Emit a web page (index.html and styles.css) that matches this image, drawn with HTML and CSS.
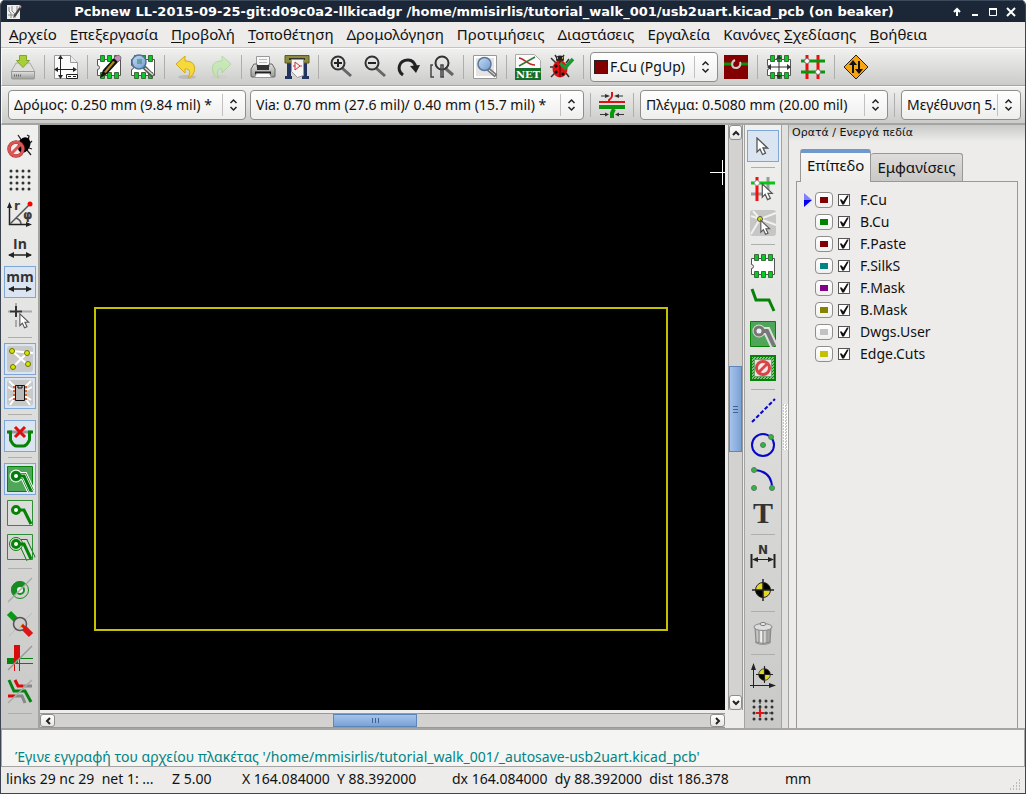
FILE: index.html
```html
<!DOCTYPE html>
<html lang="el">
<head>
<meta charset="utf-8">
<title>Pcbnew</title>
<link rel="stylesheet" href="styles.css">
</head>
<body>
<svg class="defs" aria-hidden="true">
  <defs>
    <linearGradient id="metal" x1="0" y1="0" x2="0" y2="1"><stop offset="0" stop-color="#e2e2e0"/><stop offset="1" stop-color="#999996"/></linearGradient>
    <linearGradient id="lens" x1="0" y1="0" x2="1" y2="1"><stop offset="0" stop-color="#c9dcf2"/><stop offset="1" stop-color="#6f9bd0"/></linearGradient>
    <linearGradient id="can" x1="0" y1="0" x2="1" y2="0"><stop offset="0" stop-color="#a8a8a5"/><stop offset=".4" stop-color="#f2f2f0"/><stop offset="1" stop-color="#8f8f8c"/></linearGradient>
    <pattern id="hatch" width="3" height="3" patternUnits="userSpaceOnUse"><rect width="3" height="3" fill="#e8f4e8"/><path d="M-1 1l2-2M0 3l3-3M2 4l2-2" stroke="#0a840a" stroke-width="1.300"/></pattern>
    <symbol id="chevrons" viewBox="0 0 10 14"><path d="M2 5l3-3 3 3M2 9l3 3 3-3" fill="none" stroke="#222" stroke-width="1.500"/></symbol>
    <symbol id="pointer" viewBox="0 0 13 19"><path d="M1 1v14l3-3 2.500 5.500 3-1.300L7 11h4.500z" fill="#fff" stroke="#555" stroke-width="1.300"/></symbol>
    <symbol id="footprint" viewBox="0 0 26 26"><path d="M1.500 5.500h23v16h-23v-6a2 2 0 0 0 0-4z" fill="#fff" stroke="#555"/><path d="M4.500 1.500h4v6h-4zM11.500 1.500h4v6h-4zM18.500 1.500h4v6h-4zM4.500 18.500h4v6h-4zM11.500 18.500h4v6h-4zM18.500 18.500h4v6h-4z" fill="#00cc22" stroke="#3c6b3c"/></symbol>
    <symbol id="target" viewBox="0 0 22 22"><circle cx="11" cy="11" r="7.500" fill="#e3d81b"/><path d="M11 11V3.500a7.500 7.500 0 0 1 7.500 7.500zM11 11v7.500A7.500 7.500 0 0 1 3.500 11z" fill="#000"/><circle cx="11" cy="11" r="7.500" fill="none" stroke="#222"/><path d="M11 0v22M0 11h22" stroke="#222" stroke-width="1.500"/></symbol>
    <symbol id="updown" viewBox="0 0 26 26"><path d="M2 20h22" stroke="#222" stroke-width="1.500"/><path d="M1 20l6-3v6zM25 20l-6-3v6z" fill="#222"/></symbol>
  </defs>
</svg>
<div class="window">
  <header class="titlebar">
    <svg class="app-icon" viewBox="0 0 16 16"><path d="M1 1h13v14H1z" fill="#eee"/><path d="M3 3v4l2 2v5M6 2v5l3 3v4M11 2v6M2 11h8" stroke="#888" fill="none"/><path d="M14 2L8 11l-1 3 3-2 6-9z" fill="#444"/><path d="M13 2l2 1" stroke="#d9a" stroke-width="2"/></svg>
    <h1 class="title">Pcbnew LL-2015-09-25-git:d09c0a2-llkicadgr /home/mmisirlis/tutorial_walk_001/usb2uart.kicad_pcb (on beaker)</h1>
    <div class="window-buttons">
      <button aria-label="Πάνω"><svg viewBox="0 0 10 10"><path d="M5 9V2M2 5l3-3 3 3" fill="none" stroke="#fff" stroke-width="2"/></svg></button>
      <button aria-label="Ελαχιστοποίηση"><svg viewBox="0 0 10 10"><path d="M2 8h6" stroke="#fff" stroke-width="2"/></svg></button>
      <button aria-label="Μεγιστοποίηση"><svg viewBox="0 0 10 10"><path d="M1.500 2.500h7v6h-7z" fill="none" stroke="#fff"/><path d="M1 2h8" stroke="#fff" stroke-width="2"/></svg></button>
      <button aria-label="Κλείσιμο"><svg viewBox="0 0 10 10"><path d="M1 1l8 8M9 1L1 9" stroke="#fff" stroke-width="2"/></svg></button>
    </div>
  </header>
  <nav class="menubar">
    <button><u>Α</u>ρχείο</button>
    <button><u>Ε</u>πεξεργασία</button>
    <button><u>Π</u>ροβολή</button>
    <button><u>Τ</u>οποθέτηση</button>
    <button>Δρομολόγηση</button>
    <button>Προτιμήσεις</button>
    <button>Δια<u>σ</u>τάσεις</button>
    <button>Εργαλεία</button>
    <button>Κανόνες <u>Σ</u>χεδίασης</button>
    <button><u>Β</u>οήθεια</button>
  </nav>

  <div class="toolbar" role="toolbar">
    <button class="tool" aria-label="Αποθήκευση"><svg viewBox="0 0 26 26"><path d="M6 9h14l5 9H1z" fill="#dededc" stroke="#aaa"/><path d="M1.500 17.500h23V24q0 1-1 1h-21q-1 0-1-1z" fill="url(#metal)" stroke="#999"/><path d="M4 21.500h8" stroke="#666" stroke-width="2" stroke-dasharray="1 1"/><path d="M9.500 1.500h7v5h3L13 13.500 6.500 6.500h3z" fill="#a8cf3a" stroke="#7fa52a"/></svg></button>
    <span class="sep"></span>
    <button class="tool" aria-label="Ρυθμίσεις σελίδας"><svg viewBox="0 0 26 26"><path d="M1.500 1.500h16l7 7v16h-23z" fill="#fafafa" stroke="#999"/><path d="M17.500 1.500v7h7" fill="#eee" stroke="#999"/><path d="M7.500 3v20M3 15.500h19" stroke="#222"/><path d="M7.500 1l-2.500 4h5zM7.500 25l-2.500-4h5zM1 15.500l4-2.500v5zM24 15.500l-4-2.500v5z" fill="#222"/><path d="M13.500 20.500h11v4h-11z" fill="#fff" stroke="#222"/><path d="M15 22.500h3m2 0h3" stroke="#222"/></svg></button>
    <span class="sep"></span>
    <button class="tool" aria-label="Επεξεργαστής αποτυπωμάτων"><svg viewBox="0 0 26 26"><use href="#footprint"/><path d="M18 4L7 16l-3 8 7-4L22 8z" fill="#111"/><path d="M17 7L8 18l2 1L19 8z" fill="#b58a1a"/><path d="M18 4l2-2q3-2 5 1 1 2-3 5z" fill="#c98abf" stroke="#666" stroke-width=".7"/></svg></button>
    <button class="tool" aria-label="Προβολέας αποτυπωμάτων"><svg viewBox="0 0 26 26"><use href="#footprint"/><path d="M14 13l9 9" stroke="#555" stroke-width="4"/><path d="M15 14l8 7" stroke="#ddd" stroke-width="1.500"/><circle cx="9" cy="8" r="7" fill="url(#lens)" stroke="#4f7396" stroke-width="1.500"/><path d="M7 5h5v5H7z" fill="#3f8f7a" opacity=".6"/></svg></button>
    <span class="sep"></span>
    <button class="tool" aria-label="Αναίρεση"><svg viewBox="0 0 26 26"><ellipse cx="14" cy="23" rx="9" ry="2" fill="#bbb"/><path d="M3 10l9-8v5c8 0 11 4 9 11-1 3-3 5-6 6 3-5 2-10-3-9v4z" fill="#f8d93c" stroke="#d0aa1b"/></svg></button>
    <button class="tool" aria-label="Επανάληψη"><svg viewBox="0 0 26 26" opacity=".55"><ellipse cx="12" cy="23" rx="9" ry="2" fill="#ccc"/><path d="M24 10l-9-8v5C7 7 4 11 6 18c1 3 3 5 6 6-3-5-2-10 3-9v4z" fill="#b5ee9a" stroke="#8fd070"/></svg></button>
    <span class="sep"></span>
    <button class="tool" aria-label="Εκτύπωση"><svg viewBox="0 0 26 26"><path d="M6.500 2.500h13v11h-13z" fill="#f8f8f8" stroke="#999"/><path d="M9 5.500h8M9 8.500h8" stroke="#bbb"/><path d="M4 10h3v3h12v-3h3l3 5v7q0 1-1 1H2q-1 0-1-1v-7z" fill="url(#metal)" stroke="#666"/><path d="M7 11h12v5H7z" fill="#333"/><path d="M5 17.500h16v3H5z" fill="#222"/><path d="M6.500 19.500h13l2 4h-17z" fill="#fff" stroke="#999"/></svg></button>
    <button class="tool" aria-label="Σχεδίαση"><svg viewBox="0 0 26 26"><path d="M3 9h4v14H3zM19 9h4v14h-4z" fill="#23345e"/><path d="M1 22h7v3H1zM18 22h7v3h-7z" fill="#23345e"/><path d="M1 1.500h24V9h-24z" fill="#8c8a3f" stroke="#5d5b22"/><path d="M5 5h16" stroke="#333" stroke-width="2"/><path d="M7.500 5.500h12v16l-6 2-6-6z" fill="#f4f4f4" stroke="#999"/><path d="M11 8v8l5-4zM9 12h2m5 0h2" fill="none" stroke="#c33"/></svg></button>
    <span class="sep"></span>
    <button class="tool" aria-label="Μεγέθυνση"><svg viewBox="0 0 26 26"><path d="M15 14l9 8" stroke="#666" stroke-width="3"/><circle cx="11" cy="9" r="6.500" fill="none" stroke="#333" stroke-width="2"/><path d="M11 5v8M7 9h8" stroke="#222" stroke-width="2"/></svg></button>
    <button class="tool" aria-label="Σμίκρυνση"><svg viewBox="0 0 26 26"><path d="M15 14l9 8" stroke="#666" stroke-width="3"/><circle cx="11" cy="9" r="6.500" fill="none" stroke="#333" stroke-width="2"/><path d="M7 9h8" stroke="#222" stroke-width="2"/></svg></button>
    <button class="tool" aria-label="Ανανέωση"><svg viewBox="0 0 26 26"><path d="M8 21C1 16 4 6 13 6c4 0 7 3 8 8" fill="none" stroke="#222" stroke-width="3"/><path d="M15 12l10-1-4 8z" fill="#222"/></svg></button>
    <button class="tool" aria-label="Αυτόματη εστίαση"><svg viewBox="0 0 26 26"><path d="M16 14l8 7" stroke="#666" stroke-width="3"/><circle cx="13" cy="9" r="6.500" fill="none" stroke="#333" stroke-width="2"/><path d="M4 11H2v12h3M15 23h-3V11h2v12" fill="none" stroke="#444" stroke-width="1.500"/></svg></button>
    <span class="sep"></span>
    <button class="tool" aria-label="Εύρεση"><svg viewBox="0 0 26 26"><path d="M1.500 1.500h23v23h-23z" fill="#fff" stroke="#999"/><path d="M4 4h18v18H4z" fill="#e4e4e4"/><path d="M16 15l8 7" stroke="#777" stroke-width="4"/><path d="M17 16l6 5" stroke="#eee"/><circle cx="12.500" cy="10" r="6.500" fill="url(#lens)" stroke="#58789c" stroke-width="1.500"/></svg></button>
    <span class="sep"></span>
    <button class="tool" aria-label="Ανάγνωση netlist"><svg viewBox="0 0 26 26"><path d="M.5.5h19l6 6v18H.5z" fill="#fafafa" stroke="#aaa"/><path d="M4 4c5 0 8 7 16 7" fill="none" stroke="#b22" stroke-width="1.500"/><path d="M4 12L20 3" stroke="#373" stroke-width="1.500"/><path d="M0 14h26v12H0z" fill="#12702a"/><text class="net-label" x="13" y="24" text-anchor="middle">NET</text></svg></button>
    <button class="tool" aria-label="Έλεγχος κανόνων"><svg viewBox="0 0 26 26"><path d="M7 9L2 4m3 9H1m5 6l-4 4M17 9l3-4m-3 14l3 4M8 4L6 1m7 3l2-3" stroke="#333" stroke-width="1.500"/><ellipse cx="11" cy="5" rx="4" ry="3.500" fill="#222"/><ellipse cx="11" cy="15" rx="7.500" ry="8.500" fill="#d11"/><path d="M11 6v17" stroke="#400"/><path d="M8 4h1m4 0h1" stroke="#ed3" stroke-width="1.500"/><circle cx="7" cy="12" r="1.500"/><circle cx="7" cy="18" r="1.500"/><circle cx="14" cy="20" r="1.500"/><path d="M11 9l5 5 8-9" fill="none" stroke="#179a35" stroke-width="3.500"/></svg></button>
    <span class="sep"></span>
    <div class="combo combo-layer">
      <select aria-label="Επίπεδο"><option>F.Cu (PgUp)</option></select>
      <span class="combo-swatch"></span>
      <svg class="combo-arrows"><use href="#chevrons"/></svg>
    </div>
    <button class="tool" aria-label="Ζεύγος επιπέδων"><svg viewBox="0 0 26 26"><path d="M1 1h24v24H1z" fill="#840000"/><path d="M1 10h9m7 0h8" stroke="#0a8f0a" stroke-width="3"/><path d="M12 6c-4 2-4 8 1 8 4 0 5-4 4-6" fill="none" stroke="#ccc" stroke-width="2"/></svg></button>
    <span class="sep"></span>
    <button class="tool" aria-label="Λειτουργία αποτυπώματος"><svg viewBox="0 0 26 26"><use href="#footprint"/><path d="M13 4v18M4 13h18" stroke="#333"/><path d="M13 1l-3 4h6zM13 25l-3-4h6zM1 13l4-3v6zM25 13l-4-3v6z" fill="#333"/></svg></button>
    <button class="tool" aria-label="Λειτουργία διαδρόμων"><svg viewBox="0 0 26 26"><path d="M7 1v24M18 1v24" stroke="#e80f0f" stroke-width="3"/><path d="M1 7h24M1 18h24" stroke="#0a960a" stroke-width="3"/><circle cx="7" cy="7" r="2.500" fill="#fff" stroke="#777"/><circle cx="18" cy="18" r="2.500" fill="#fff" stroke="#777"/></svg></button>
    <span class="sep"></span>
    <button class="tool" aria-label="Δρομολογητής"><svg viewBox="0 0 26 26"><path d="M13 1l12 12-12 12L1 13z" fill="#f6a512" stroke="#222" stroke-linejoin="round"/><path d="M10 19V9m6-2v10" stroke="#111" stroke-width="2"/><path d="M10 6l-4 5h8zM16 20l-4-5h8z" fill="#111"/></svg></button>
  </div>

  <div class="toolbar toolbar-options" role="toolbar">
    <div class="combo combo-track"><select aria-label="Δρόμος"><option>Δρόμος: 0.250 mm (9.84 mil) *</option></select><svg class="combo-arrows"><use href="#chevrons"/></svg></div>
    <div class="combo combo-via"><select aria-label="Via"><option>Via: 0.70 mm (27.6 mil)/ 0.40 mm (15.7 mil) *</option></select><svg class="combo-arrows"><use href="#chevrons"/></svg></div>
    <span class="sep"></span>
    <button class="tool" aria-label="Αυτόματο πλάτος"><svg viewBox="0 0 26 26"><path d="M0 10h26" stroke="#d81414" stroke-width="2"/><path d="M13 0v4q0 2-3 4v2" fill="none" stroke="#d81414" stroke-width="2"/><path d="M0 15h26" stroke="#0a960a" stroke-width="4"/><path d="M15 17l-2 4v5" fill="none" stroke="#0a960a" stroke-width="4"/><path d="M2 4h6m16 0h-6M1 22.500h7m17 0h-7" stroke="#333"/><path d="M11 4L6 2v4zM15 4l5-2v4zM10 22.500l-4-2v4zM16 22.500l4-2v4z" fill="#333"/></svg></button>
    <span class="sep"></span>
    <div class="combo combo-grid"><select aria-label="Πλέγμα"><option>Πλέγμα: 0.5080 mm (20.00 mil)</option></select><svg class="combo-arrows"><use href="#chevrons"/></svg></div>
    <span class="sep"></span>
    <div class="combo combo-zoom"><select aria-label="Μεγέθυνση"><option>Μεγέθυνση 5.00</option></select><svg class="combo-arrows"><use href="#chevrons"/></svg></div>
  </div>

  <main class="workspace">
    <div class="sidebar sidebar-left" role="toolbar">
      <button class="tool" aria-label="DRC ανενεργό"><svg viewBox="0 0 26 26"><path d="M15 8l-4-6m10 6l1-5-2-1M10 9l4-1m8 3l3-3m-3 7l3 1m-5 1l4 5" fill="none" stroke="#222" stroke-width="1.300"/><ellipse cx="17" cy="12" rx="6" ry="8" transform="rotate(25 17 12)" fill="#000"/><circle cx="9" cy="16" r="7" fill="none" stroke="#a33" stroke-width="3.500"/><circle cx="9" cy="16" r="7" fill="none" stroke="#dd5555" stroke-width="2.500"/><path d="M4 21L14 11" stroke="#dd5555" stroke-width="3"/></svg></button>
      <button class="tool" aria-label="Πλέγμα"><svg viewBox="0 0 26 26"><path d="M3 4h20M3 10h20M3 16h20M3 22h20" stroke="#333" stroke-width="3" stroke-dasharray="0 6" stroke-dashoffset="-1" stroke-linecap="round"/></svg></button>
      <button class="tool" aria-label="Πολικές συντεταγμένες"><svg viewBox="0 0 26 26"><path d="M2.500 4v19.500H22" fill="none" stroke="#222" stroke-width="1.500"/><path d="M2.500 1L0 7h5zM25 23.500L19 21v5z" fill="#222"/><path d="M3 23L22 4M9 17q5 2 5 6" fill="none" stroke="#555" stroke-width="1.500"/><circle cx="23" cy="3" r="2.500" fill="#f00"/><text class="icon-letter" x="7" y="9">r</text><text class="icon-letter" x="16" y="18">φ</text></svg></button>
      <button class="tool" aria-label="Ίντσες"><svg viewBox="0 0 26 26"><text class="unit" x="13" y="14" text-anchor="middle">In</text><use href="#updown"/></svg></button>
      <button class="tool active" aria-label="Χιλιοστά"><svg viewBox="0 0 26 26"><text class="unit" x="13" y="13" text-anchor="middle">mm</text><use href="#updown"/></svg></button>
      <button class="tool" aria-label="Σχήμα δρομέα"><svg viewBox="0 0 26 26"><path d="M9 0v5m0 12v7M15 8.500h10M1 8.500h3" stroke="#aaa" stroke-width="2"/><path d="M9 3v11M3 8.500h12" stroke="#333" stroke-width="2"/><use href="#pointer" x="12" y="10" width="11" height="16"/></svg></button>
      <span class="sep"></span>
      <button class="tool active" aria-label="Γενικές συνδέσεις"><svg viewBox="0 0 26 26"><rect width="26" height="26" rx="3" fill="#c9c9c9"/><path d="M5 5l15 13M6 21L20 7M5 5l21 2" stroke="#fff" stroke-width="2"/><g fill="#d4e600" stroke="#6b7300"><circle cx="5" cy="5" r="2.500"/><circle cx="20" cy="7" r="2.500"/><circle cx="6" cy="21" r="2.500"/><circle cx="21" cy="18" r="2.500"/></g></svg></button>
      <button class="tool active" aria-label="Συνδέσεις εξαρτήματος"><svg viewBox="0 0 26 26"><rect width="26" height="26" rx="3" fill="#c9c9c9"/><path d="M8 7L2 1m6 10L1 7m7 9l-6 4m6-2l-5 7M18 7l6-6m-6 10l7-4m-7 9l6 4m-6-2l5 7" stroke="#fff" stroke-width="2"/><path d="M6 7h2M6 11h2M6 15h2M6 19h2m10-12h2m-2 4h2m-2 4h2m-2 4h2" stroke="#d9621e" stroke-width="2"/><path d="M8.500 5.500h9v15h-9z" fill="#bbb" stroke="#111"/><path d="M11 6v2h4V6" fill="none" stroke="#111"/></svg></button>
      <span class="sep"></span>
      <button class="tool active" aria-label="Αυτόματη διαγραφή"><svg viewBox="0 0 26 26"><path d="M1 9h24" stroke="#999" stroke-width="3"/><path d="M0 9h3.500v8q3 6 6 6h7q3 0 6-6V9H26" fill="none" stroke="#068306" stroke-width="3"/><path d="M8 4l10 10M18 4L8 14" stroke="#e00d0d" stroke-width="3"/></svg></button>
      <span class="sep"></span>
      <button class="tool active" aria-label="Γεμάτες ζώνες"><svg viewBox="0 0 26 26"><path d="M.5.5h25v25H.5z" fill="#4fa558" stroke="#068306"/><path d="M9 10h8l7 15" fill="none" stroke="#fff" stroke-width="8"/><circle cx="9" cy="10" r="6.500" fill="#fff"/><path d="M9 10h8l7 15" fill="none" stroke="#077b10" stroke-width="6"/><path d="M9 10h8l7 15" fill="none" stroke="#fff" stroke-width="4.500"/><circle cx="9" cy="10" r="5.500" fill="#4fa558"/><circle cx="9" cy="10" r="3.500" fill="#fff" stroke="#077b10" stroke-width="3"/><path d="M12 10h5l7 15" fill="none" stroke="#077b10" stroke-width="3"/></svg></button>
      <button class="tool" aria-label="Χωρίς ζώνες"><svg viewBox="0 0 26 26"><path d="M.5.5h25v25H.5z" fill="#dcdcdb" stroke="#2d8e35"/><circle cx="9" cy="10" r="3.500" fill="#fff" stroke="#068306" stroke-width="3"/><path d="M12 10h5l7 14" fill="none" stroke="#068306" stroke-width="3"/></svg></button>
      <button class="tool" aria-label="Περιγράμματα ζωνών"><svg viewBox="0 0 26 26"><path d="M9 10h8l7 15" fill="none" stroke="#087b10" stroke-width="10"/><path d="M9 10h8l7 15" fill="none" stroke="#dcdcdb" stroke-width="8"/><circle cx="9" cy="10" r="6.500" fill="#dcdcdb" stroke="#068306"/><circle cx="9" cy="10" r="3.500" fill="#fff" stroke="#068306" stroke-width="3"/><path d="M12 10h5l7 15" fill="none" stroke="#068306" stroke-width="3"/><path d="M.5.5h25v25H.5z" fill="none" stroke="#2d8e35"/></svg></button>
      <span class="sep"></span>
      <button class="tool" aria-label="Περίγραμμα vias"><svg viewBox="0 0 26 26"><circle cx="13" cy="13" r="8.500" fill="none" stroke="#168c20"/><path d="M19 7A8.500 8.500 0 1 0 7 19z" fill="#168c20"/><circle cx="13" cy="13" r="4" fill="#eee" stroke="#168c20" stroke-width="2"/><path d="M1 25L25 1" stroke="#aaa" stroke-width="1.500"/></svg></button>
      <button class="tool" aria-label="Περίγραμμα pads"><svg viewBox="0 0 26 26"><path d="M2 25L25 2" stroke="#bbb"/><path d="M2 2l10 10" stroke="#079a14" stroke-width="6"/><path d="M15 15l9 9" stroke="#dc1515" stroke-width="6"/><circle cx="13" cy="13" r="6.500" fill="#ccc" stroke="#555" stroke-width="1.500"/><path d="M12 17l4-5 2 4z" fill="#d9ae10"/><path d="M15 14l4 4" stroke="#dc1515" stroke-width="3"/></svg></button>
      <button class="tool" aria-label="Περίγραμμα διαδρόμων"><svg viewBox="0 0 26 26"><path d="M0 16h11" stroke="#078211" stroke-width="6"/><path d="M11 13.500h15M11 18.500h15" stroke="#078211"/><path d="M10 0v15" stroke="#d80c0c" stroke-width="6"/><path d="M7.500 15v11m5-11v11" stroke="#d80c0c"/><path d="M1 25L25 1" stroke="#999" stroke-width="1.500"/></svg></button>
      <button class="tool" aria-label="Υψηλή αντίθεση"><svg viewBox="0 0 26 26"><path d="M8 1l3 6h5" fill="none" stroke="#d80c0c" stroke-width="3"/><path d="M16 7h9M8 17h7l3 7" fill="none" stroke="#888" stroke-width="3"/><path d="M1 17h7" stroke="#d80c0c" stroke-width="3"/><path d="M2 1l5 11h11l6 11" fill="none" stroke="#078211" stroke-width="3"/><path d="M1 24L25 1" stroke="#aaa" stroke-width="1.500"/></svg></button>
      <span class="sep"></span>
    </div>

    <div class="canvas-area">
      <svg class="board" aria-label="Πλακέτα"><rect x="55" y="183" width="572" height="322" fill="none" stroke="#c2c200" stroke-width="2"/><path d="M670 47.500h15M682.500 35v25" stroke="#fff"/></svg>
      <div class="scrollbar scrollbar-v">
        <button aria-label="Πάνω"><svg viewBox="0 0 8 8"><path d="M1 6l3-3 3 3" fill="none" stroke="#222" stroke-width="2"/></svg></button>
        <span></span><span class="thumb"></span><span></span>
        <button aria-label="Κάτω"><svg viewBox="0 0 8 8"><path d="M1 2l3 3 3-3" fill="none" stroke="#222" stroke-width="2"/></svg></button>
      </div>
      <div class="scrollbar scrollbar-h">
        <button aria-label="Αριστερά"><svg viewBox="0 0 8 8"><path d="M6 1L3 4l3 3" fill="none" stroke="#222" stroke-width="2"/></svg></button>
        <span></span><span class="thumb"></span><span></span>
        <button aria-label="Δεξιά"><svg viewBox="0 0 8 8"><path d="M2 1l3 3-3 3" fill="none" stroke="#222" stroke-width="2"/></svg></button>
      </div>
    </div>

    <div class="sidebar sidebar-right" role="toolbar">
      <button class="tool active" aria-label="Επιλογή"><svg viewBox="0 0 26 26"><use href="#pointer" x="6" y="4" width="13" height="19"/></svg></button>
      <span class="sep"></span>
      <button class="tool" aria-label="Επισήμανση δικτύου"><svg viewBox="0 0 26 26"><path d="M18 1v17M1 18h17" stroke="#999" stroke-width="3"/><path d="M7 1v24" stroke="#f01010" stroke-width="3"/><path d="M1 7h24" stroke="#0ac416" stroke-width="3"/><circle cx="7" cy="7" r="2.500" fill="#fff" stroke="#999"/><use href="#pointer" x="11" y="7" width="13" height="18"/></svg></button>
      <button class="tool" aria-label="Τοπικές συνδέσεις"><svg viewBox="0 0 26 26"><rect width="26" height="26" rx="3" fill="#c6c6c4"/><path d="M10 9L3 1m7 8L26 3M10 9L1 24M10 9l16 6M10 9L1 6" stroke="#f1f1f1" stroke-width="2"/><circle cx="10" cy="9" r="2.500" fill="#d4e600" stroke="#555"/><use href="#pointer" x="10" y="9" width="11" height="17"/></svg></button>
      <span class="sep"></span>
      <button class="tool" aria-label="Προσθήκη αποτυπώματος"><svg viewBox="0 0 26 26"><use href="#footprint"/></svg></button>
      <button class="tool" aria-label="Προσθήκη διαδρόμων"><svg viewBox="0 0 26 26"><path d="M2 2l4 11h13l5 11" fill="none" stroke="#068306" stroke-width="3"/></svg></button>
      <button class="tool" aria-label="Προσθήκη ζώνης"><svg viewBox="0 0 26 26"><path d="M.5.5h25v25H.5z" fill="#4fa558" stroke="#068306"/><path d="M9 10h8l7 15" fill="none" stroke="#ddd" stroke-width="8"/><circle cx="9" cy="10" r="6.500" fill="#ddd"/><circle cx="9" cy="10" r="4" fill="#eee" stroke="#777" stroke-width="3"/><path d="M12 10h5l7 15" fill="none" stroke="#777" stroke-width="4"/></svg></button>
      <button class="tool" aria-label="Απαγορευμένη περιοχή"><svg viewBox="0 0 26 26"><path d="M1 1h24v24H1z" fill="url(#hatch)" stroke="#068306" stroke-width="2"/><path d="M4.500 4.500h17v17h-17z" fill="#e4e4e3" stroke="#6fa56f"/><circle cx="13" cy="13" r="6.500" fill="#f4e8e8" stroke="#d94444" stroke-width="3"/><path d="M8 18L18 8" stroke="#d94444" stroke-width="3"/></svg></button>
      <span class="sep"></span>
      <button class="tool" aria-label="Γραμμή"><svg viewBox="0 0 26 26"><path d="M2 24L25 1" stroke="#0808c8" stroke-width="2" stroke-dasharray="4 2"/></svg></button>
      <button class="tool" aria-label="Κύκλος"><svg viewBox="0 0 26 26"><circle cx="13" cy="13" r="11" fill="none" stroke="#0808c8" stroke-width="2"/><g fill="#24bd3c" stroke="#676"><circle cx="13" cy="13" r="2.500"/><circle cx="21" cy="5" r="2.500"/></g></svg></button>
      <button class="tool" aria-label="Τόξο"><svg viewBox="0 0 26 26"><path d="M4 4q18 1 18 18" fill="none" stroke="#0808c8" stroke-width="2"/><g fill="#24bd3c" stroke="#676"><circle cx="4" cy="4" r="2.500"/><circle cx="4" cy="22" r="2.500"/><circle cx="22" cy="22" r="2.500"/></g></svg></button>
      <button class="tool" aria-label="Κείμενο"><svg viewBox="0 0 26 26"><text class="text-tool" x="13" y="23" text-anchor="middle">T</text></svg></button>
      <span class="sep"></span>
      <button class="tool" aria-label="Διάσταση"><svg viewBox="0 0 26 26"><path d="M1.500 11v14m23-14v14" stroke="#222" stroke-width="2"/><path d="M5 16.500h16" stroke="#222"/><path d="M2 16.500l6-2.500v5zM24 16.500L18 14v5z" fill="#222"/><text class="dimension" x="13" y="11" text-anchor="middle">N</text></svg></button>
      <button class="tool" aria-label="Στόχος"><svg viewBox="0 0 26 26"><use href="#target" x="2" y="2" width="22" height="22"/></svg></button>
      <span class="sep"></span>
      <button class="tool" aria-label="Διαγραφή"><svg viewBox="0 0 26 26"><ellipse cx="13" cy="22" rx="8" ry="3" fill="#999"/><path d="M5 8h16l-1 14q-7 3-14 0z" fill="url(#can)" stroke="#888"/><path d="M9 10v12m4-12v13m4-13v12" stroke="#999" stroke-width="1.500"/><ellipse cx="13" cy="7" rx="9" ry="3.500" fill="#ddd" stroke="#888"/><ellipse cx="13" cy="4" rx="3" ry="1.500" fill="#eee" stroke="#777"/></svg></button>
      <span class="sep"></span>
      <button class="tool" aria-label="Αρχή συντεταγμένων"><svg viewBox="0 0 26 26"><path d="M3.500 5v20M0 22.500h22" stroke="#222"/><path d="M3.500 0L1 7h5zM26 22.500L19 20v5z" fill="#222"/><use href="#target" x="6" y="3" width="17" height="17"/></svg></button>
      <button class="tool" aria-label="Αρχή πλέγματος"><svg viewBox="0 0 26 26"><path d="M4 4h20M4 10h20M4 16h20M4 22h20" stroke="#333" stroke-width="3" stroke-dasharray="0 6" stroke-linecap="round"/><path d="M10 2v10M10 16h12" stroke="#333" stroke-dasharray="2 1"/><path d="M10 12v8M6 16h8" stroke="#e01212" stroke-width="2"/></svg></button>
    </div>
    <div class="sash"><span class="grip"></span></div>

    <aside class="layers-panel">
      <h2 class="panel-caption">Ορατά / Ενεργά πεδία</h2>
      <div class="notebook">
        <div class="tabs" role="tablist">
          <button class="tab selected" role="tab" aria-selected="true">Επίπεδο</button>
          <button class="tab" role="tab" aria-selected="false">Εμφανίσεις</button>
        </div>
        <ul class="layers">
          <li class="current"><button aria-label="Χρώμα F.Cu"><i class="c-red"></i></button><input type="checkbox" id="l1" checked><label for="l1">F.Cu</label></li>
          <li><button aria-label="Χρώμα B.Cu"><i class="c-green"></i></button><input type="checkbox" id="l2" checked><label for="l2">B.Cu</label></li>
          <li><button aria-label="Χρώμα F.Paste"><i class="c-red"></i></button><input type="checkbox" id="l3" checked><label for="l3">F.Paste</label></li>
          <li><button aria-label="Χρώμα F.SilkS"><i class="c-teal"></i></button><input type="checkbox" id="l4" checked><label for="l4">F.SilkS</label></li>
          <li><button aria-label="Χρώμα F.Mask"><i class="c-purple"></i></button><input type="checkbox" id="l5" checked><label for="l5">F.Mask</label></li>
          <li><button aria-label="Χρώμα B.Mask"><i class="c-olive"></i></button><input type="checkbox" id="l6" checked><label for="l6">B.Mask</label></li>
          <li><button aria-label="Χρώμα Dwgs.User"><i class="c-silver"></i></button><input type="checkbox" id="l7" checked><label for="l7">Dwgs.User</label></li>
          <li><button aria-label="Χρώμα Edge.Cuts"><i class="c-yellow"></i></button><input type="checkbox" id="l8" checked><label for="l8">Edge.Cuts</label></li>
        </ul>
      </div>
    </aside>
  </main>

  <p class="message">Έγινε εγγραφή του αρχείου πλακέτας '/home/mmisirlis/tutorial_walk_001/_autosave-usb2uart.kicad_pcb'</p>
  <footer class="statusbar">
    <span>links 29 nc 29  net 1: ...</span>
    <span>Z 5.00</span>
    <span>X 164.084000  Y 88.392000</span>
    <span>dx 164.084000  dy 88.392000  dist 186.378</span>
    <span>mm</span>
    <svg class="size-grip" viewBox="0 0 12 12"><path d="M10 1h1M7 4h1m2 0h1M4 7h1m2 0h1m2 0h1M1 10h1m2 0h1m2 0h1m2 0h1" stroke="#aaa" stroke-width="1.500"/></svg>
  </footer>
</div>
</body>
</html>
```
FILE: styles.css
```css
* { box-sizing: border-box; }

body {
  margin: 0;
  background: #fff;
  color: #111;
  font: 14px/20px "Noto Sans", "Open Sans", sans-serif;
}

button, select, input { margin: 0; padding: 0; font: inherit; color: inherit; }
button { border: 0; background: none; }
.defs { position: absolute; width: 0; height: 0; }

.window {
  display: flex;
  flex-direction: column;
  min-height: 100vh;
  border: solid #3d4552;
  border-width: 0 1px 1px;
  border-radius: 5px 5px 0 0;
  background: #edeceb;
  overflow: hidden;
}

/* Title bar */
.titlebar {
  display: flex;
  align-items: center;
  height: 22px;
  padding: 0 9px 0 5px;
  border-top: 1px solid #3d4a5c;
  background: #1b2737;
  color: #fff;
}
.app-icon { width: 16px; height: 16px; }
.title {
  flex: 1;
  margin: 0;
  padding-right: 6px;
  font: bold 13px/20px "DejaVu Sans", sans-serif;
  text-align: center;
  white-space: nowrap;
}
.window-buttons { display: flex; gap: 8px; }
.window-buttons button { display: flex; }
.window-buttons svg { width: 10px; height: 10px; }

/* Menu bar */
.menubar {
  display: flex;
  gap: 13px;
  height: 26px;
  padding: 2px 8px 4px;
  border-bottom: 1px solid #c4c3c2;
  font-size: 15px;
  white-space: nowrap;
}
.menubar u { text-underline-offset: 2px; }

/* Toolbars */
.toolbar {
  display: flex;
  align-items: center;
  height: 38px;
  padding: 0 4px;
  border: solid #fbfbfb;
  border-width: 1px 0 0 1px;
  border-bottom: 1px solid #a5a5a3;
  background: linear-gradient(#f0f0ef, #cbcbca);
}
.toolbar-options { height: 39px; border-bottom-width: 2px; }
.tool {
  display: flex;
  flex: none;
  align-items: center;
  justify-content: center;
  width: 32px;
  height: 32px;
  margin: 1px;
  border: 1px solid transparent;
}
.tool svg { width: 26px; height: 26px; overflow: visible; }
.tool.active { border-color: #7ea6d9; background: #dbe5f1; }
.sep { flex: none; width: 1px; height: 24px; margin: 0 4px; background: #aeaeac; }

.net-label { font: bold 10px "DejaVu Serif", serif; fill: #fff; }
.unit { font: bold 14px "Open Sans", sans-serif; fill: #333; }
.icon-letter { font: bold 12px "DejaVu Sans", sans-serif; fill: #443a3a; }
.text-tool { font: bold 30px "Liberation Serif", serif; fill: #333; }
.dimension { font: bold 12px "DejaVu Sans", sans-serif; fill: #333; }

/* Drop-downs */
.combo { display: grid; flex: none; align-items: center; height: 30px; }
.combo > * { grid-area: 1 / 1; }
.combo select {
  appearance: none;
  width: 100%;
  height: 30px;
  padding: 0 24px 0 5px;
  border: 1px solid #8f8e8b;
  border-radius: 4px;
  background: linear-gradient(#fff, #eeeeed);
  text-overflow: clip;
}
.combo-arrows {
  justify-self: end;
  width: 24px;
  height: 22px;
  padding: 4px 2px 4px 0;
  border-left: 1px solid #c2c1bf;
  pointer-events: none;
}
.combo-swatch {
  width: 14px;
  height: 14px;
  margin-left: 4px;
  border: 1px solid #222;
  background: #840000;
  pointer-events: none;
}
.combo-layer { width: 128px; margin: 0 1px 0 2px; }
.combo-layer select { padding-left: 19px; }
.combo-track { width: 238px; margin: 0 4px 0 2px; }
.combo-via { width: 334px; margin-right: 2px; }
.combo-grid { width: 248px; margin: 0 2px; }
.combo-zoom { flex: 1; max-width: 121px; margin-left: 2px; }

/* Work area */
.workspace { display: flex; flex: 1; }
.sidebar {
  display: flex;
  flex: none;
  flex-direction: column;
  align-items: center;
  background: linear-gradient(#f0f0ef, #c9c9c8);
}
.sidebar .sep { width: 24px; height: 1px; margin: 4px 0; }
.sidebar-left { width: 39px; padding: 4px 0 9px; border: solid #a3a3a1; border-width: 0 2px 0 0; }
.sidebar-right { width: 38px; padding: 4px 0 0; border: solid #a3a3a1; border-width: 0 1px; }

.canvas-area {
  display: grid;
  flex: 1;
  grid-template: minmax(0, 1fr) 15px / minmax(0, 1fr) 15px;
  gap: 3px;
  padding-right: 1px;
}
.board { width: 100%; height: 100%; background: #000; }

.scrollbar { display: grid; background: #d3d2d0; }
.scrollbar-v { grid-template-rows: 15px 226fr 86fr 243fr 15px; border: solid #999; border-width: 0 1px; }
.scrollbar-h { grid-template-columns: 15px 278fr 84fr 293fr 15px; border: solid #999; border-width: 1px 0; }
.scrollbar button {
  display: flex;
  align-items: center;
  justify-content: center;
  border: 1px solid #8f8e8b;
  border-radius: 3px;
  background: linear-gradient(#fff, #e6e6e4);
}
.scrollbar svg { width: 8px; height: 8px; }
.thumb { display: grid; place-items: center; border: 1px solid #5c85ba; }
.thumb::before { content: ""; }
.scrollbar-v .thumb { background: linear-gradient(90deg, #a5c3ea, #7ba2d5); }
.scrollbar-h .thumb { background: linear-gradient(#a5c3ea, #7ba2d5); }
.scrollbar-v .thumb::before { width: 5px; height: 7px; background: repeating-linear-gradient(#3d6394 0 1px, transparent 1px 3px); }
.scrollbar-h .thumb::before { width: 7px; height: 5px; background: repeating-linear-gradient(90deg, #3d6394 0 1px, transparent 1px 3px); }

.sash { display: grid; flex: none; place-items: center; width: 7px; border-right: 1px solid #a3a3a1; background: #e1e1df; }
.grip { width: 5px; height: 46px; background: repeating-conic-gradient(#fff 0 25%, #c4c4c2 0 50%) 0 0 / 3px 3px; }

/* Layers panel */
.layers-panel { display: flex; flex: none; flex-direction: column; width: 236px; }
.panel-caption {
  margin: 0;
  padding: 0 3px;
  background: linear-gradient(#c9c9c7, #ebebea);
  font: 11px/16px "DejaVu Sans", sans-serif;
}
.notebook { display: flex; flex: 1; flex-direction: column; margin: 8px 7px 0; }
.tabs { display: flex; align-items: flex-end; padding: 0 0 0 4px; font-size: 15px; }
.tab {
  height: 28px;
  padding: 0 6px 2px;
  border: solid #999896;
  border-width: 1px 1px 0 0;
  border-radius: 3px 3px 0 0;
  background: linear-gradient(#dedddb, #c9c8c6);
}
.tab.selected {
  z-index: 1;
  height: 33px;
  margin-bottom: -1px;
  padding-bottom: 6px;
  border-width: 0 1px;
  border-top: 4px solid #6f98cc;
  background: linear-gradient(#f8f8f7, #edeceb);
}
.layers {
  flex: 1;
  margin: 0;
  padding: 7px 0 0 7px;
  border: solid #999896;
  border-width: 1px 1px 0;
  list-style: none;
}
.layers li { display: flex; align-items: center; height: 22px; border-left: 8px solid transparent; padding-left: 3px; }
.layers .current { padding-left: 0; border-left: 0; }
.layers .current::before {
  content: "";
  width: 8px;
  height: 14px;
  margin-right: 3px;
  background: linear-gradient(#8080ff 50%, #0000f0 50%);
  clip-path: polygon(0 0, 100% 50%, 0 100%);
}
.layers button {
  display: grid;
  place-items: center;
  width: 18px;
  height: 16px;
  border: 1px solid #8f8e8b;
  border-radius: 4px;
  background: linear-gradient(#fff, #f0f0ef);
}
.layers i { width: 8px; height: 6px; }
.layers input {
  appearance: none;
  display: grid;
  place-items: center;
  width: 12px;
  height: 12px;
  margin: 0 10px 0 5px;
  border: 1px solid #555;
  background: #fff;
}
.layers input:checked::before {
  content: "";
  width: 10px;
  height: 10px;
  background: #111;
  clip-path: polygon(8% 45%, 28% 45%, 42% 65%, 80% 5%, 98% 5%, 50% 95%, 32% 95%);
}
.c-red { background: #840000; }
.c-green { background: #008400; }
.c-teal { background: #008484; }
.c-purple { background: #840084; }
.c-olive { background: #848400; }
.c-silver { background: #c2c2c2; }
.c-yellow { background: #c2c200; }

/* Message and status bars */
.message {
  margin: 0;
  padding: 17px 13px 0;
  border: solid #a5a5a3;
  border-width: 2px 1px 1px;
  background: #f5f5f3;
  color: #008484;
  line-height: 19px;
}
.statusbar {
  display: grid;
  grid-template-columns: 166px 70px 210px 333px 1fr 12px;
  align-items: center;
  height: 26px;
  padding: 0 4px 2px 5px;
  white-space: pre;
}
.size-grip { align-self: end; width: 12px; height: 12px; }
```
